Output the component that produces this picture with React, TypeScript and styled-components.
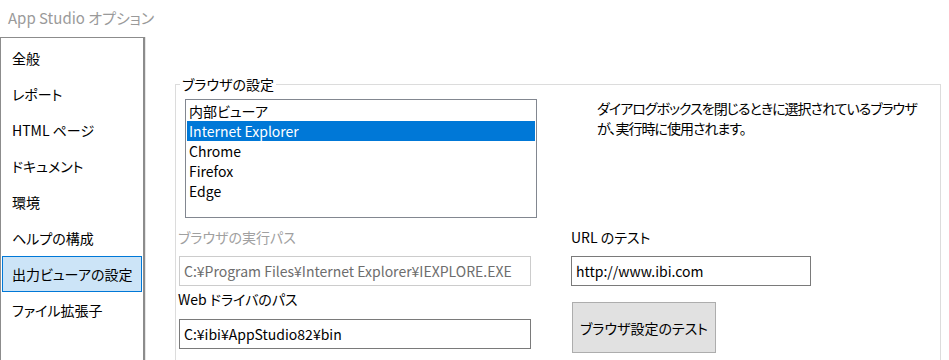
import React from 'react';
import styled, { createGlobalStyle } from 'styled-components';

const GlobalStyle = createGlobalStyle`
  html, body {
    margin: 0;
    padding: 0;
    background: #ffffff;
  }
  body {
    font-family: "Noto Sans CJK JP", "Noto Sans", sans-serif;
    font-size: 14px;
    font-feature-settings: "palt";
    color: #000000;
  }
`;

const Window = styled.div`
  width: 949px;
  height: 360px;
  overflow: hidden;
  display: flex;
  flex-direction: column;
`;

const Title = styled.div`
  height: 37px;
  line-height: 36px;
  padding-left: 8px;
  font-size: 15px;
  color: #9a9a9a;
`;

const Body = styled.div`
  flex: 1;
  display: flex;
  min-height: 0;
`;

const Sidebar = styled.ul`
  list-style: none;
  margin: 0;
  padding: 2px 1px 0 1px;
  width: 145px;
  flex-shrink: 0;
  box-sizing: border-box;
  border: 1px solid #8c8c8c;
  border-right-width: 2px;
  border-bottom: none;
  box-shadow: 1px 0 0 #e6e6e6;
`;

const NavItem = styled.li<{ $active?: boolean }>`
  height: 36px;
  line-height: 34px;
  padding-left: 9px;
  border: 1px solid ${({ $active }) => ($active ? '#0078d7' : 'transparent')};
  background: ${({ $active }) => ($active ? '#cce4f7' : 'transparent')};
  box-sizing: border-box;
  white-space: nowrap;
`;

const Content = styled.div`
  flex: 1;
  padding: 37px 8px 0 30px;
`;

const GroupBox = styled.fieldset`
  margin: 0;
  padding: 5px 0 0 2px;
  border: 1px solid #dcdcdc;
  border-bottom: none;
  min-width: 0;
  height: 400px;
  box-sizing: border-box;
`;

const Legend = styled.legend`
  padding: 0 2px;
  margin-left: 2px;
  line-height: 20px;
`;

const Grid = styled.div`
  display: grid;
  grid-template-columns: 393px 1fr;
  grid-template-rows: 128px 29px 30px 33px 30px;
`;

const ListBox = styled.ul`
  list-style: none;
  margin: 0 0 0 7px;
  padding: 1px;
  width: 352px;
  height: 119px;
  box-sizing: border-box;
  border: 1px solid #828790;
`;

const ListItem = styled.li<{ $selected?: boolean }>`
  height: 20px;
  line-height: 20px;
  padding-left: 2px;
  background: ${({ $selected }) => ($selected ? '#0078d7' : 'transparent')};
  color: ${({ $selected }) => ($selected ? '#ffffff' : '#000000')};
`;

const Description = styled.p`
  margin: -1px 0 0 26px;
  line-height: 20px;
  letter-spacing: -1px;
  white-space: nowrap;
`;

const Label = styled.div<{ $disabled?: boolean; $offset?: number }>`
  line-height: 20px;
  padding-top: ${({ $offset }) => $offset ?? 0}px;
  color: ${({ $disabled }) => ($disabled ? '#a0a0a0' : '#000000')};
  white-space: nowrap;
`;

const TextBox = styled.div<{ $disabled?: boolean; $width: number; $indent?: number }>`
  width: ${({ $width }) => $width}px;
  height: 30px;
  box-sizing: border-box;
  margin-left: ${({ $indent }) => $indent ?? 1}px;
  padding-left: 4px;
  line-height: 28px;
  border: 1px solid ${({ $disabled }) => ($disabled ? '#cccccc' : '#7a7a7a')};
  color: ${({ $disabled }) => ($disabled ? '#6d6d6d' : '#000000')};
  white-space: nowrap;
  overflow: hidden;
`;

const RightCell = styled.div`
  grid-column: 2;
`;

const TestButton = styled.button`
  grid-column: 2;
  grid-row: 4 / 6;
  align-self: start;
  margin: 16px 0 0 1px;
  width: 144px;
  height: 51px;
  background: #e1e1e1;
  border: 1px solid #adadad;
  font-family: inherit;
  font-size: 14px;
  font-feature-settings: "palt";
  color: #000000;
  padding: 0;
`;

const navItems = [
  '全般',
  'レポート',
  'HTML ページ',
  'ドキュメント',
  '環境',
  'ヘルプの構成',
  '出力ビューアの設定',
  'ファイル拡張子',
];

const browsers = ['内部ビューア', 'Internet Explorer', 'Chrome', 'Firefox', 'Edge'];

export default function App() {
  return (
    <>
      <GlobalStyle />
      <Window>
        <Title>App Studio オプション</Title>
        <Body>
          <Sidebar>
            {navItems.map((item) => (
              <NavItem key={item} $active={item === '出力ビューアの設定'}>
                {item}
              </NavItem>
            ))}
          </Sidebar>
          <Content>
            <GroupBox>
              <Legend>ブラウザの設定</Legend>
              <Grid>
                <ListBox>
                  {browsers.map((b) => (
                    <ListItem key={b} $selected={b === 'Internet Explorer'}>
                      {b}
                    </ListItem>
                  ))}
                </ListBox>
                <Description>
                  ダイアログボックスを閉じるときに選択されているブラウザ
                  <br />
                  が、実行時に使用されます。
                </Description>

                <Label $disabled>ブラウザの実行パス</Label>
                <RightCell>
                  <Label>URL のテスト</Label>
                </RightCell>

                <TextBox $disabled $width={352}>
                  C:¥Program Files¥Internet Explorer¥IEXPLORE.EXE
                </TextBox>
                <RightCell>
                  <TextBox $width={240} $indent={0}>
                    http://www.ibi.com
                  </TextBox>
                </RightCell>

                <Label $offset={3}>Web ドライバのパス</Label>
                <TestButton>ブラウザ設定のテスト</TestButton>

                <TextBox $width={352}>C:¥ibi¥AppStudio82¥bin</TextBox>
              </Grid>
            </GroupBox>
          </Content>
        </Body>
      </Window>
    </>
  );
}
